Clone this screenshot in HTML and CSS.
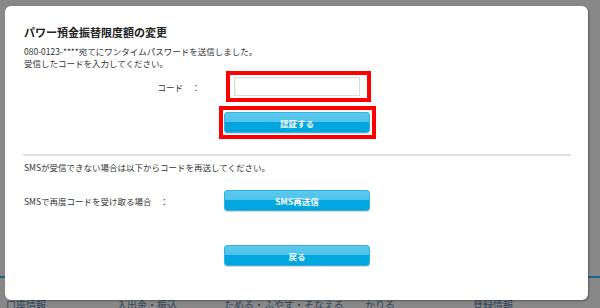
FILE: index.html
```html
<!DOCTYPE html>
<html lang="ja">
<head>
  <meta charset="UTF-8">
  <meta name="viewport" content="width=device-width, initial-scale=1.0">
  <title>パワー預金振替限度額の変更</title>
  <link rel="stylesheet" href="styles.css">
</head>
<body>
  <!-- Page behind the dialog (dimmed) -->
  <div class="page">
    <div class="page-body"></div>
    <nav class="global-nav">
      <span>口座情報</span>
      <span>入出金・振込</span>
      <span>ためる・ふやす・そなえる</span>
      <span>かりる</span>
      <span>登録情報</span>
    </nav>
  </div>

  <!-- One-time password dialog -->
  <div class="modal">
    <h1 class="modal-title">パワー預金振替限度額の変更</h1>
    <p class="message">
      080-0123-****宛てにワンタイムパスワードを送信しました。<br>
      受信したコードを入力してください。
    </p>

    <div class="code-row">
      <label class="code-label" for="code">コード　：</label>
      <div class="highlight input-highlight">
        <input id="code" class="code-input" type="text">
      </div>
    </div>

    <div class="highlight button-highlight">
      <button class="blue-btn">認証する</button>
    </div>

    <hr class="divider">

    <p class="message resend-note">SMSが受信できない場合は以下からコードを再送してください。</p>

    <div class="resend-row">
      <span class="resend-label">SMSで再度コードを受け取る場合　：</span>
      <button class="blue-btn">SMS再送信</button>
    </div>

    <div class="back-row">
      <button class="blue-btn">戻る</button>
    </div>
  </div>
</body>
</html>
```

FILE: styles.css
```css
body {
  margin: 0;
  width: 600px;
  height: 308px;
  overflow: hidden;
  background-color: #888888;
  font-family: "Noto Sans CJK JP", "Noto Sans", sans-serif;
  color: #333;
}

/* Dimmed page behind */
.page-body {
  height: 276px;
  border-bottom: 2px solid #1d6390;
}
.global-nav {
  display: grid;
  grid-template-columns: 111px 107px 141px 108px auto;
  padding: 21px 0 0 6px;
  font-size: 10px;
  line-height: 12px;
  color: #2c435c;
  white-space: nowrap;
}

/* Dialog */
.modal {
  position: absolute;
  left: 5px;
  top: 6px;
  width: 583px;
  height: 294px;
  box-sizing: border-box;
  padding: 19px 17px 0 18px;
  background-color: #fff;
  border-radius: 6px;
  box-shadow: 1px 1px 2px rgba(0, 0, 0, 0.35);
}
.modal-title {
  margin: 0 0 0 1px;
  font-size: 11px;
  line-height: 14px;
  font-weight: bold;
  color: #222;
}
.message {
  margin: 6px 0 0 1px;
  font-size: 8.5px;
  line-height: 12px;
  color: #333;
}

.highlight {
  border: 4px solid #ff0000;
  background-color: #fff;
}

.code-row {
  display: flex;
  align-items: center;
  margin-top: 2px;
}
.code-label {
  width: 177px;
  margin-right: 26px;
  text-align: right;
  font-size: 8.5px;
  line-height: 12px;
}
.input-highlight {
  padding: 2px 7px 2px 4px;
}
.code-input {
  display: block;
  width: 126px;
  height: 19px;
  box-sizing: border-box;
  margin: 0;
  border: 1px solid #dcdcdc;
  box-shadow: inset 1px 1px 1px rgba(0, 0, 0, 0.06);
  padding: 0 4px;
}

.button-highlight {
  display: inline-block;
  margin: 4px 0 0 196px;
  padding: 2px 2px 2px 1px;
}
.blue-btn {
  display: block;
  width: 146px;
  height: 21px;
  margin: 0;
  padding: 0;
  border: 1px solid #36b1de;
  border-radius: 3px;
  background: linear-gradient(to bottom, #5cc8ed 0%, #4fc3ea 48%, #00a6dd 50%, #00a6dd 100%);
  box-shadow: 0 1px 1px rgba(0, 0, 0, 0.15);
  color: #fff;
  font-family: inherit;
  font-size: 8.5px;
  font-weight: bold;
  cursor: pointer;
}

.divider {
  margin: 15px 0 0 0;
  height: 2px;
  border: none;
  background-color: #dedede;
}
.resend-note {
  margin-top: 5px;
}

.resend-row {
  display: flex;
  align-items: center;
  margin-top: 17px;
}
.resend-label {
  width: 200px;
  margin-left: 1px;
  font-size: 8.5px;
  line-height: 12px;
}

.back-row {
  margin: 34px 0 0 201px;
}
```
